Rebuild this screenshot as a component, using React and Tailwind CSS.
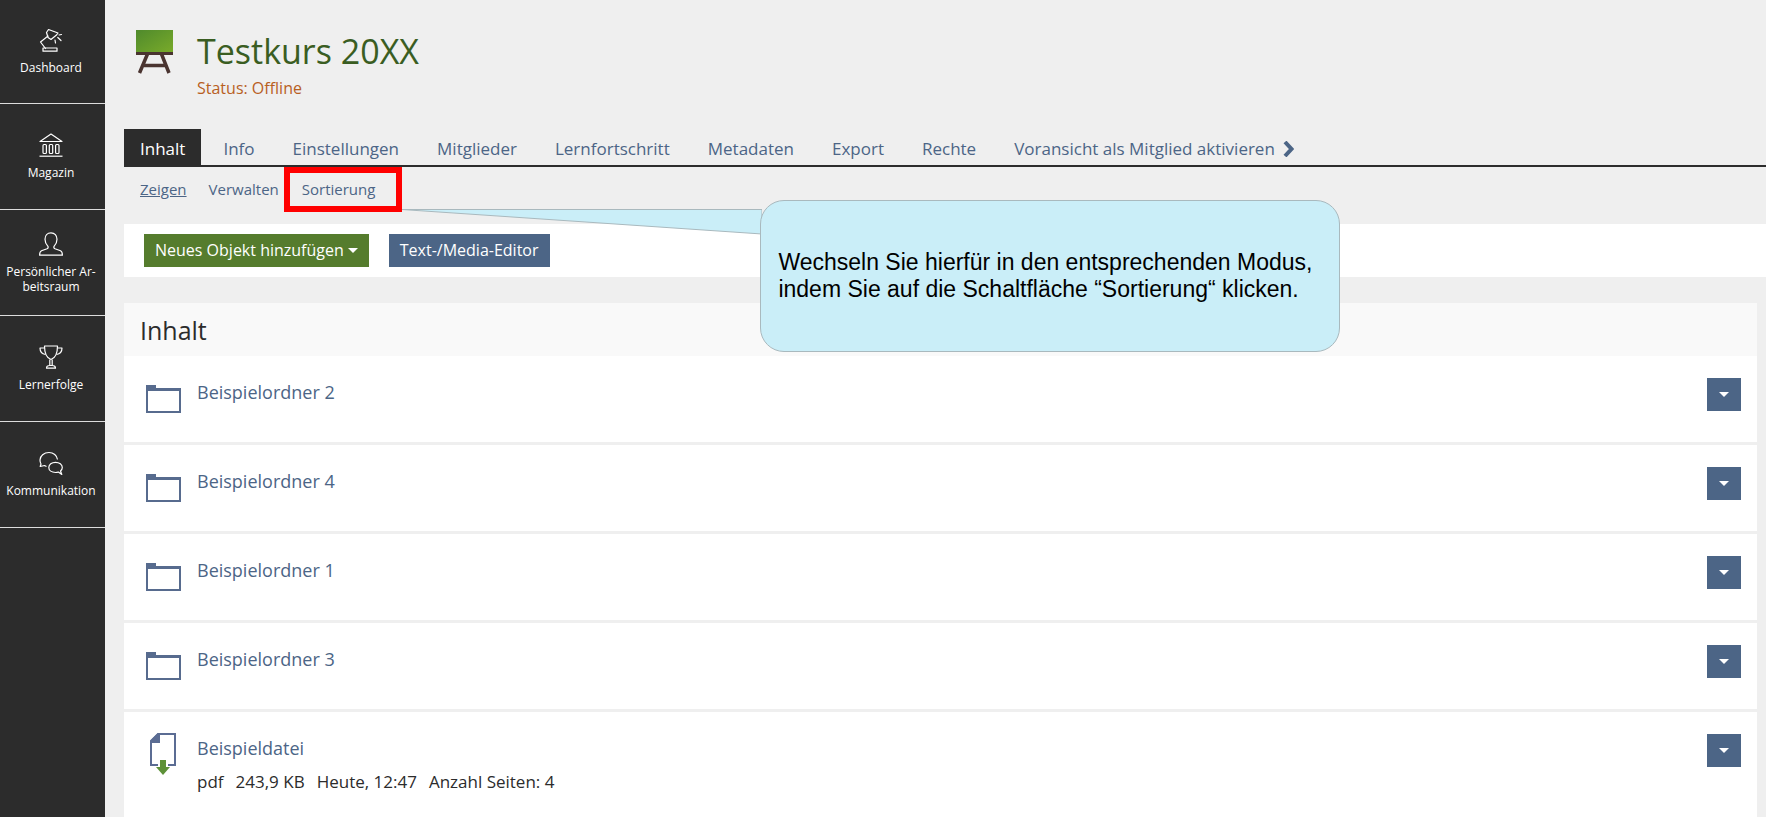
import React from 'react';

const DashboardIcon = () => (
  <svg className="size-6" viewBox="0 0 24 24" fill="none" stroke="currentColor" strokeWidth="1.2" strokeLinejoin="round" strokeLinecap="round">
    <path d="M9.5 1.5 19 5 17.5 7 12 11.5 9 9.5 7.5 4.5Z" />
    <path d="M9 8 1.5 14 6.5 20.5" />
    <path d="M20 7 22.5 6.5M18.8 9.5 22 12.5M16 12 16.5 15" />
    <rect x="4" y="20" width="14" height="3.2" />
  </svg>
);

const MagazinIcon = () => (
  <svg className="size-6" viewBox="0 0 24 24" fill="none" stroke="currentColor" strokeWidth="1.2" strokeLinejoin="round">
    <path d="M12 1 23 8.5H1Z" />
    <rect x="4" y="11.5" width="3.4" height="9" rx="1" />
    <rect x="10.3" y="11.5" width="3.4" height="9" rx="1" />
    <rect x="16.6" y="11.5" width="3.4" height="9" rx="1" />
    <path d="M.5 23.2H23.5" />
  </svg>
);

const PersonIcon = () => (
  <svg className="size-6" viewBox="0 0 24 24" fill="none" stroke="currentColor" strokeWidth="1.2" strokeLinejoin="round">
    <path d="M12 .8C8.3 .8 6 3.5 6 7.3c0 3.2 1.2 5.2 2.8 6.9.8 1.2.3 2-.8 2.5L2.5 18.8C1 19.5.6 20.8.6 23.2H23.4c0-2.4-.4-3.7-1.9-4.4L16 16.7c-1.1-.5-1.6-1.3-.8-2.5C16.8 12.5 18 10.5 18 7.3 18 3.5 15.7.8 12 .8Z" />
  </svg>
);

const TrophyIcon = () => (
  <svg className="size-6" viewBox="0 0 24 24" fill="none" stroke="currentColor" strokeWidth="1.2" strokeLinejoin="round">
    <path d="M5.5 1H18.5C18.5 8 16.5 13 12 14.5 7.5 13 5.5 8 5.5 1Z" />
    <path d="M5.6 3H1C1 7 3 9 6.5 9.5M18.4 3H23C23 7 21 9 17.5 9.5" />
    <path d="M10.8 14.5V20.5H13.2V14.5M7.5 23.2C7.5 21.2 9 20.5 10.8 20.5H13.2C15 20.5 16.5 21.2 16.5 23.2Z" />
  </svg>
);

const ChatIcon = () => (
  <svg className="size-6" viewBox="0 0 24 24" fill="none" stroke="currentColor" strokeWidth="1.2" strokeLinejoin="round">
    <path d="M18.5 8.5C18 4.5 14.5 1.5 10 1.5 5 1.5 1 4.8 1 9 1 10.8 1.3 12 2 13L1.2 15.5 5.5 14.5 7.5 15.5" />
    <path d="M21.5 20C22.7 19 23.3 18 23.3 16.5 23.3 13.5 20.3 11.3 16.5 11.3S9.8 13.5 9.8 16.5 12.7 21.5 16.5 21.5C17.5 21.5 18.5 21.4 19.3 21L22.8 23.5Z" />
  </svg>
);

const CourseIcon = () => (
  <svg className="mt-[30px] h-11 w-[37px]" viewBox="0 0 37 44">
    <defs>
      <linearGradient id="board" x1="0" y1="0" x2="1" y2="1">
        <stop offset="0" stopColor="#4f8a2c" />
        <stop offset="1" stopColor="#7aab2a" />
      </linearGradient>
    </defs>
    <path d="M11.5 24 3.5 43M25.5 24 33 43M8 35.5H29" stroke="#4a3430" strokeWidth="3.5" fill="none" />
    <rect width="37" height="23" fill="url(#board)" />
    <rect y="22" width="37" height="3" fill="#4a3430" />
  </svg>
);

const FolderIcon = () => (
  <svg className="mt-[29px] ml-[22px] h-7 w-[35px]" viewBox="0 0 35 28">
    <path d="M0 0H10V3H35V28H0Z" fill="#576b8e" />
    <rect x="2" y="6" width="31" height="20" fill="#fff" />
  </svg>
);

const FileIcon = () => (
  <svg className="mt-[21px] ml-[26px] h-[42px] w-[26px]" viewBox="0 0 26 42">
    <path d="M8 1H25V32H1V8Z" fill="#fff" stroke="#5b6c93" strokeWidth="2" />
    <path d="M8 0 10 1V10H0V8Z" fill="#5b6c93" />
    <path d="M8 25H18V34H8Z" fill="#fff" />
    <path d="M10 27H16V34H20L13 42 6 34H10Z" fill="#5d9138" />
  </svg>
);

const sidebarItems = [
  { label: 'Dashboard', icon: DashboardIcon },
  { label: 'Magazin', icon: MagazinIcon },
  { label: 'Persönlicher Ar-beitsraum', icon: PersonIcon },
  { label: 'Lernerfolge', icon: TrophyIcon },
  { label: 'Kommunikation', icon: ChatIcon }
];

const tabs = ['Info', 'Einstellungen', 'Mitglieder', 'Lernfortschritt', 'Metadaten', 'Export', 'Rechte'];

const items = [
  { title: 'Beispielordner 2' },
  { title: 'Beispielordner 4' },
  { title: 'Beispielordner 1' },
  { title: 'Beispielordner 3' },
  { title: 'Beispieldatei', props: ['pdf', '243,9 KB', 'Heute, 12:47', 'Anzahl Seiten: 4'] }
];

const Caret = () => (
  <svg className="h-[5px] w-[10px]" viewBox="0 0 10 5" fill="currentColor">
    <path d="M0 0H10L5 5Z" />
  </svg>
);

const Sidebar = () => (
  <nav className="w-[105px] shrink-0 bg-[#2c2c2c] text-white">
    {sidebarItems.map((item) => {
      const Icon = item.icon;
      return (
        <button
          key={item.label}
          className="flex h-[106px] w-full flex-col items-center justify-center gap-2 border-b border-[#dddddd] pr-1 pl-px text-xs leading-[15px] font-medium first:h-[104px]"
        >
          <Icon />
          <span>{item.label}</span>
        </button>
      );
    })}
  </nav>
);

const Callout = () => (
  <div className="absolute top-full left-full -mt-[6px] ml-[6px] w-[938px]">
    <svg className="absolute top-[9px] left-0 h-[26px] w-[360px]" viewBox="0 0 360 26">
      <path d="M0 .5H360V25L0 .5Z" fill="#caeef8" stroke="#a9b9be" />
    </svg>
    <div className="relative ml-[358px] rounded-3xl border border-[#a9b9be] bg-[#caeef8] px-[17px] py-12 font-['Liberation_Sans',sans-serif] text-[23px] leading-[27px] text-black">
      Wechseln Sie hierfür in den entsprechenden Modus, indem Sie auf die Schaltfläche “Sortierung“ klicken.
    </div>
  </div>
);

const App = () => {
  return (
    <div className="flex min-h-screen bg-[#efefef] font-['Open_Sans',sans-serif] text-[#4c6586]">
      <Sidebar />

      <main className="min-w-0 flex-1 pl-[19px]">
        {/* Header */}
        <header className="flex h-[129px] gap-6 pl-3">
          <CourseIcon />
          <div className="pt-[30px]">
            <h1 className="text-[34px] leading-[42px] text-[#3a5d22]">Testkurs 20XX</h1>
            <p className="text-base leading-8 text-[#b8601f]">Status: Offline</p>
          </div>
        </header>

        {/* Tabs */}
        <nav className="flex gap-[6px] border-b-2 border-[#2c2c2c] text-[17px] leading-8">
          <a href="#" className="bg-[#2c2c2c] px-4 pt-1 text-white">Inhalt</a>
          {tabs.map((tab) => (
            <a key={tab} href="#" className="px-4 pt-1">{tab}</a>
          ))}
          <a href="#" className="flex items-center gap-2 px-4 pt-1">
            Voransicht als Mitglied aktivieren
            <svg className="h-4 w-[11px]" viewBox="0 0 11 16">
              <path d="M2 1 8.5 8 2 15" fill="none" stroke="currentColor" strokeWidth="4" />
            </svg>
          </a>
        </nav>

        {/* Sub tabs */}
        <nav className="flex h-[57px] items-start pl-4 text-[15px] leading-[33px]">
          <a href="#" className="mt-[6px] underline">Zeigen</a>
          <a href="#" className="mt-[6px] ml-[22px]">Verwalten</a>
          <div className="relative z-10 ml-[5px] border-6 border-[#ff0000] pr-[21px] pl-3">
            <a href="#">Sortierung</a>
            <Callout />
          </div>
        </nav>

        {/* Toolbar */}
        <div className="flex gap-5 bg-white px-5 py-[10px] text-base leading-[33px] text-white">
          <button className="flex items-center gap-1 bg-[#557c2d] px-[11px]">
            Neues Objekt hinzufügen
            <Caret />
          </button>
          <button className="bg-[#4c6586] px-[11px]">Text-/Media-Editor</button>
        </div>

        {/* Content */}
        <section className="mt-[26px] mr-[9px]">
          <h2 className="bg-[#f9f9f9] px-4 pt-px text-[25px] leading-[52px] text-[#2c2c2c]">Inhalt</h2>
          <ul className="bg-white">
            {items.map((item) => (
              <li key={item.title} className="flex min-h-[89px] border-b-3 border-[#efefef] last:min-h-[105px] last:border-b-0">
                <div className="w-[73px] shrink-0">{item.props ? <FileIcon /> : <FolderIcon />}</div>
                <div className="flex-1 pt-[22px]">
                  <a href="#" className="text-lg leading-7">{item.title}</a>
                  {item.props && (
                    <p className="mt-2 flex gap-3 text-[17px] leading-6 text-[#2c2c2c]">
                      {item.props.map((prop) => (
                        <span key={prop}>{prop}</span>
                      ))}
                    </p>
                  )}
                </div>
                <button aria-label="Aktionen" className="mt-[22px] mr-4 flex h-[33px] w-[34px] items-center justify-center bg-[#4c6586] text-white">
                  <Caret />
                </button>
              </li>
            ))}
          </ul>
        </section>
      </main>
    </div>
  );
};

export default App;
